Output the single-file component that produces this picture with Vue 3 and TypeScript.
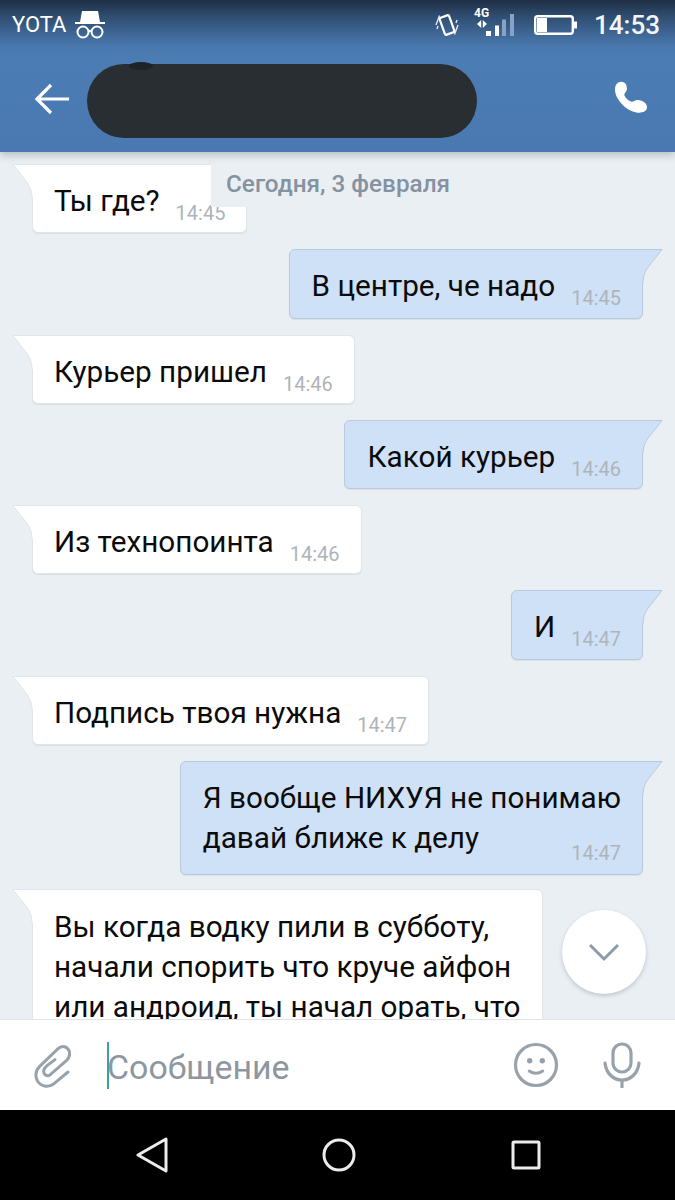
<script setup lang="ts">
interface Message {
  id: number
  mine: boolean
  lines: string[]
  time?: string
}

const messages: Message[] = [
  { id: 1, mine: false, lines: ['Ты где?'], time: '14:45' },
  { id: 2, mine: true, lines: ['В центре, че надо'], time: '14:45' },
  { id: 3, mine: false, lines: ['Курьер пришел'], time: '14:46' },
  { id: 4, mine: true, lines: ['Какой курьер'], time: '14:46' },
  { id: 5, mine: false, lines: ['Из технопоинта'], time: '14:46' },
  { id: 6, mine: true, lines: ['И'], time: '14:47' },
  { id: 7, mine: false, lines: ['Подпись твоя нужна'], time: '14:47' },
  { id: 8, mine: true, lines: ['Я вообще НИХУЯ не понимаю', 'давай ближе к делу'], time: '14:47' },
  // последнее сообщение обрезано полем ввода
  { id: 9, mine: false, lines: ['Вы когда водку пили в субботу,', 'начали спорить что круче айфон', 'или андроид, ты начал орать, что'] }
]
</script>

<template>
  <div class="phone">
    <div class="top">
      <div class="status">
        <span class="carrier">YOTA</span>
        <svg class="spy" width="32" height="30" viewBox="0 0 32 30">
          <path d="M8 1h16l2 11H6z" fill="#fff" />
          <rect x="1" y="12" width="30" height="2" fill="#fff" />
          <circle cx="9" cy="22" r="5.5" fill="none" stroke="#fff" stroke-width="2" />
          <circle cx="23" cy="22" r="5.5" fill="none" stroke="#fff" stroke-width="2" />
          <path d="M14 21h4" stroke="#fff" stroke-width="2" />
        </svg>
        <span class="spacer"></span>
        <svg class="vibrate" width="24" height="24" viewBox="0 0 24 24">
          <rect x="7" y="3" width="10" height="18" rx="1.500" transform="rotate(-20 12 12)" fill="none" stroke="#fff" stroke-width="2.200" />
          <path d="M1 12L4.500 2.500M2 16l1-3M19.500 21.500L23 12M21 10l1-3" stroke="#dfe8f2" stroke-width="1.400" />
        </svg>
        <div class="net">
          <span class="net-label">4G</span>
          <svg width="10" height="8" viewBox="0 0 10 8" class="net-arrows">
            <path d="M4.200 0v8L0 4zM5.800 0v8L10 4z" fill="#fff" />
          </svg>
        </div>
        <svg class="bars" width="28" height="22" viewBox="0 0 28 22">
          <rect x="0" y="17" width="5" height="5" fill="#fff" />
          <rect x="9" y="11.500" width="4" height="10.500" fill="#fff" />
          <rect x="16" y="5.500" width="4" height="16.500" fill="#86a3c6" />
          <rect x="24" y="0" width="4" height="22" fill="#86a3c6" />
        </svg>
        <svg class="battery" width="43" height="20" viewBox="0 0 43 20">
          <rect x="1.200" y="1.200" width="37.600" height="17.600" rx="2.500" fill="none" stroke="#fff" stroke-width="2.400" />
          <rect x="3" y="3" width="10" height="14" fill="#fff" />
          <rect x="40" y="6.500" width="3" height="7" fill="#fff" />
        </svg>
        <span class="clock">14:53</span>
      </div>
      <div class="header">
        <svg class="back" width="36" height="32" viewBox="0 0 36 32">
          <path d="M35 16H3M17 2L3 16l14 14" fill="none" stroke="#fff" stroke-width="3.200" />
        </svg>
        <div class="blob"></div>
        <span class="spacer"></span>
        <svg class="call" width="34" height="34" viewBox="42 36 100 100">
          <path d="M48 47C55 35 72 35 78 47L80 58C81 66 72 72 72 77C76 86 84 94 94 97C100 97 106 90 113 92C125 94 140 100 139 115C137 128 120 132 105 128C78 122 55 98 47 75C44 65 44 55 48 47z" fill="#fff" />
        </svg>
      </div>
    </div>

    <div class="messages">
      <div v-for="m in messages" :key="m.id" class="row" :class="{ mine: m.mine, cut: !m.time }">
        <div class="bubble" :class="{ multi: m.lines.length > 1 }">
          <svg class="tail" width="21" height="36" viewBox="0 0 21 36">
            <path v-if="m.mine" d="M0 .5H20L7 17C3 22 1 27 1 34H0z" class="tail-fill" />
            <path v-else d="M21 .5H1L14 17C18 22 20 27 20 34H21z" class="tail-fill" />
            <path v-if="m.mine" d="M0 .5H20L7 17C3 22 1 27 1 34" class="tail-line" />
            <path v-else d="M21 .5H1L14 17C18 22 20 27 20 34" class="tail-line" />
          </svg>
          <div class="text">
            <div v-for="line in m.lines" :key="line">{{ line }}</div>
          </div>
          <span v-if="m.time" class="time">{{ m.time }}</span>
        </div>
      </div>

      <div class="date">Сегодня, 3 февраля</div>

      <div class="down">
        <svg width="32" height="20" viewBox="0 0 32 20">
          <path d="M2 3l14 14L30 3" fill="none" stroke="#8d9aa8" stroke-width="3" />
        </svg>
      </div>
    </div>

    <div class="composer">
      <svg class="clip" width="38" height="45" viewBox="40 35 114 135">
        <path d="M145 122L103 157C85 170 62 165 53 148C45 132 48 118 60 105L115 52C128 42 142 44 148 58C153 70 148 80 140 88L92 130C82 137 72 130 72 120C72 112 76 108 82 103L106 85" fill="none" stroke="#98a2ab" stroke-width="9" stroke-linecap="round" />
      </svg>
      <div class="caret"></div>
      <span class="placeholder">Сообщение</span>
      <span class="spacer"></span>
      <svg class="smile" width="46" height="46" viewBox="0 0 46 46">
        <circle cx="23" cy="23" r="20.500" fill="none" stroke="#98a2ab" stroke-width="3.200" />
        <circle cx="16.700" cy="18.700" r="2.700" fill="#98a2ab" />
        <circle cx="29.300" cy="18.700" r="2.700" fill="#98a2ab" />
        <path d="M16.300 29Q23 33.500 29.700 29" fill="none" stroke="#98a2ab" stroke-width="3" stroke-linecap="round" />
      </svg>
      <svg class="mic" width="38" height="46" viewBox="0 0 38 46">
        <rect x="10" y="2" width="18" height="28" rx="9" fill="none" stroke="#98a2ab" stroke-width="3.200" />
        <path d="M2 21c1 10 8 17 17 17s16-7 17-17M19 38v7" fill="none" stroke="#98a2ab" stroke-width="3.200" stroke-linecap="round" />
      </svg>
    </div>

    <div class="nav">
      <svg width="32" height="36" viewBox="0 0 32 36">
        <path d="M30 2v32L2 18z" fill="none" stroke="#ececec" stroke-width="3" stroke-linejoin="round" />
      </svg>
      <svg width="36" height="36" viewBox="0 0 36 36" class="nav-home">
        <circle cx="18" cy="18" r="15" fill="none" stroke="#ececec" stroke-width="3" />
      </svg>
      <svg width="32" height="32" viewBox="0 0 32 32">
        <rect x="3" y="3" width="26" height="26" rx="1" fill="none" stroke="#ececec" stroke-width="3" />
      </svg>
    </div>
  </div>
</template>

<style scoped>
.phone {
  width: 675px;
  height: 1200px;
  display: flex;
  flex-direction: column;
  overflow: hidden;
  font-family: Roboto, "Liberation Sans", sans-serif;
  background: #eaeff4;
}

.spacer {
  flex: 1;
}

/* верхняя панель */
.top {
  height: 152px;
  flex: none;
  background: linear-gradient(#1e2f44 0, #2f4d70 16px, #4a78ae 46px, #4c7cb4 60px, #4a79b1 152px);
  box-shadow: 0 3px 8px rgba(60, 70, 80, 0.3);
  position: relative;
  z-index: 2;
}

.status {
  height: 46px;
  box-sizing: border-box;
  padding: 3px 15px 0 12px;
  display: flex;
  align-items: center;
  color: #fff;
}

.carrier {
  font-size: 22px;
  margin-right: 8px;
}

.vibrate {
  margin-right: 15px;
}

.net {
  width: 12px;
  display: flex;
  flex-direction: column;
  align-items: flex-start;
  margin-bottom: 14px;
}

.net-label {
  font-size: 12px;
  font-weight: 700;
  line-height: 13px;
}

.net-arrows {
  margin-left: 3px;
}

.bars {
  margin-right: 20px;
}

.battery {
  margin-right: 17px;
}

.clock {
  font-size: 26px;
  font-weight: 500;
  color: #f2f5f9;
}

.header {
  height: 106px;
  box-sizing: border-box;
  padding: 4px 27px 0 34px;
  display: flex;
  align-items: center;
}

.back {
  margin: 0 17px 5px 0;
}

.call {
  margin-bottom: 6px;
}

.blob {
  width: 390px;
  height: 74px;
  border-radius: 37px;
  background: #282e31;
  position: relative;
}

.blob::before {
  content: "";
  position: absolute;
  left: 42px;
  top: -2px;
  width: 24px;
  height: 8px;
  border-radius: 50%;
  background: #1f2326;
}

/* сообщения */
.messages {
  flex: 1;
  min-height: 0;
  overflow: hidden;
  position: relative;
  padding-top: 12px;
  display: flex;
  flex-direction: column;
  gap: 16px;
  background: #eaeff4;
}

.row {
  display: flex;
  flex: none;
  padding-left: 32px;
}

.row.mine {
  justify-content: flex-end;
  padding: 0 32px 0 0;
}

.row.cut {
  margin-top: -2px;
}

.bubble {
  position: relative;
  height: 69.250px;
  box-sizing: border-box;
  padding: 16px 21px 0 21px;
  display: flex;
  align-items: flex-start;
  gap: 16px;
  background: #fff;
  border-radius: 0 6px 6px 6px;
  border: 1px solid #e0e5ea;
  color: #0b0b0b;
  box-shadow: 0 1px 1px rgba(120, 135, 150, 0.15);
}

.mine .bubble {
  padding-left: 22px;
  background: #cfe1f7;
  border-color: #b9cadd;
  border-radius: 6px 0 6px 6px;
}

.bubble.multi {
  height: auto;
  flex-direction: column;
  gap: 0;
  padding-bottom: 9px;
}

.cut .bubble {
  padding-top: 17px;
}

.text {
  font-size: 29.700px;
  line-height: 40px;
  white-space: nowrap;
}

.time {
  font-size: 20px;
  line-height: 24px;
  color: #aeb4ba;
  margin-top: 20px;
}

.multi .time {
  align-self: flex-end;
  margin-top: -17px;
}

.tail {
  position: absolute;
  left: -21px;
  top: -1px;
}

.mine .tail {
  left: auto;
  right: -21px;
}

.tail-fill {
  fill: #fff;
}

.mine .tail-fill {
  fill: #cfe1f7;
}

.tail-line {
  fill: none;
  stroke: #e0e5ea;
  stroke-width: 1;
}

.mine .tail-line {
  stroke: #b9cadd;
}

.date {
  position: absolute;
  left: 211px;
  top: 0;
  height: 55px;
  padding: 18px 15px 0;
  box-sizing: border-box;
  background: #eaeff4;
  color: #8592a0;
  font-size: 24.300px;
  font-weight: 500;
  line-height: 28px;
  white-space: nowrap;
}

.down {
  position: absolute;
  left: 562px;
  top: 758px;
  width: 84px;
  height: 84px;
  border-radius: 50%;
  background: #fff;
  box-shadow: 0 2px 4px rgba(90, 105, 120, 0.3);
  display: flex;
  align-items: center;
  justify-content: center;
}

/* поле ввода */
.composer {
  height: 91px;
  flex: none;
  box-sizing: border-box;
  border-top: 1px solid #dfe3e8;
  background: #fff;
  padding: 0 34px 0 33px;
  display: flex;
  align-items: center;
  position: relative;
  z-index: 1;
}

.clip {
  margin-right: 36px;
}

.caret {
  width: 2px;
  height: 47px;
  background: #3a9fa8;
}

.placeholder {
  font-size: 33.900px;
  color: #8e979f;
  margin-left: -2px;
  margin-top: 4px;
  white-space: nowrap;
}

.smile {
  margin-right: 44px;
}

.nav {
  height: 90px;
  flex: none;
  background: #000;
  padding-left: 136px;
  display: flex;
  align-items: center;
}

.nav-home {
  margin: 0 153px 0 153px;
}
</style>
